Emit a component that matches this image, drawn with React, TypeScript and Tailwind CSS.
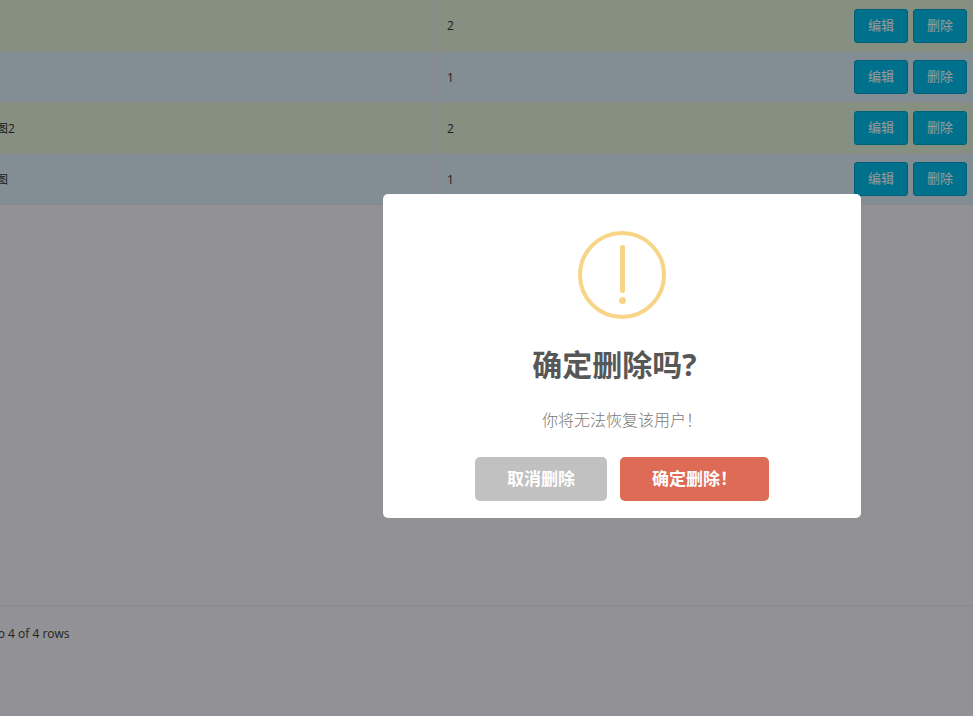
const rows = [
  { name: "首页轮播", n: "2", bg: "bg-[#dff0d8]" },
  { name: "活动图片", n: "1", bg: "bg-[#d9edf7]" },
  { name: "首页轮播图2", n: "2", bg: "bg-[#dff0d8]" },
  { name: "首页轮播图", n: "1", bg: "bg-[#d9edf7]" },
];

export default function App() {
  return (
    <div className="relative h-[716px] w-[973px] overflow-hidden bg-[#f3f2f8] font-['Open_Sans','Noto_Sans_CJK_SC',sans-serif] text-[12px] text-[#333]">
      <div className="flex h-[716px] flex-col">
        <div className="flex flex-col">
          {rows.map((r, i) => (
            <div key={i} className={`grid grid-cols-[435px_409px_129px] items-center border-b border-[#e7e7e7] ${r.bg} ${i === 0 ? "h-[52px]" : "h-[51px]"}`}>
              <div className="flex h-full items-center overflow-hidden border-r border-[#e7e7e7] pt-[1px]">
                {i >= 2 ? <span className="ml-[-52px] whitespace-nowrap">{r.name}</span> : null}
              </div>
              <div className="flex h-full items-center border-r border-[#e7e7e7] pl-[12px] pt-[1px]">{r.n}</div>
              <div className="flex h-full items-center gap-[5px] pl-[10px]">
                <button className="h-[34px] w-[54px] rounded-[3px] border border-[#00a0c8] bg-[#00bdea] text-[13px] text-white">编辑</button>
                <button className="h-[34px] w-[54px] rounded-[3px] border border-[#00a0c8] bg-[#00bdea] text-[13px] text-white">删除</button>
              </div>
            </div>
          ))}
        </div>
        <div className="flex-1" />
        <div className="flex h-[111px] items-start border-t border-[#dfe4e4] pt-[19px]">
          <span className="ml-[-67px] whitespace-nowrap text-[12px] text-[#3a3a3a]">Showing 1 to 4 of 4 rows</span>
        </div>
      </div>

      <div className="absolute inset-0 bg-black/40" />

      <div className="absolute left-[383px] top-[194px] flex h-[324px] w-[478px] flex-col items-center rounded-[5px] bg-white">
        <div className="relative mt-[37px] h-[88px] w-[88px] rounded-full border-[4px] border-[#f8d486]">
          <div className="absolute left-[38px] top-[10px] h-[48px] w-[5px] rounded-[2px] bg-[#f8d486]" />
          <div className="absolute left-[37px] top-[62px] h-[7px] w-[7px] rounded-full bg-[#f8d486]" />
        </div>
        <h2 className="mr-[15px] mt-[25px] text-[30px] font-bold leading-[42px] text-[#575757]">确定删除吗?</h2>
        <p className="mt-[22px] text-[16px] font-light leading-[24px] text-[#797979]">你将无法恢复该用户！</p>
        <div className="mt-[25px] flex gap-[13px]">
          <button className="h-[44px] w-[132px] rounded-[5px] bg-[#c1c1c1] text-[17px] font-semibold text-white">取消删除</button>
          <button className="h-[44px] w-[149px] rounded-[5px] bg-[#dd6b55] text-[17px] font-semibold text-white">确定删除！</button>
        </div>
      </div>
    </div>
  );
}
